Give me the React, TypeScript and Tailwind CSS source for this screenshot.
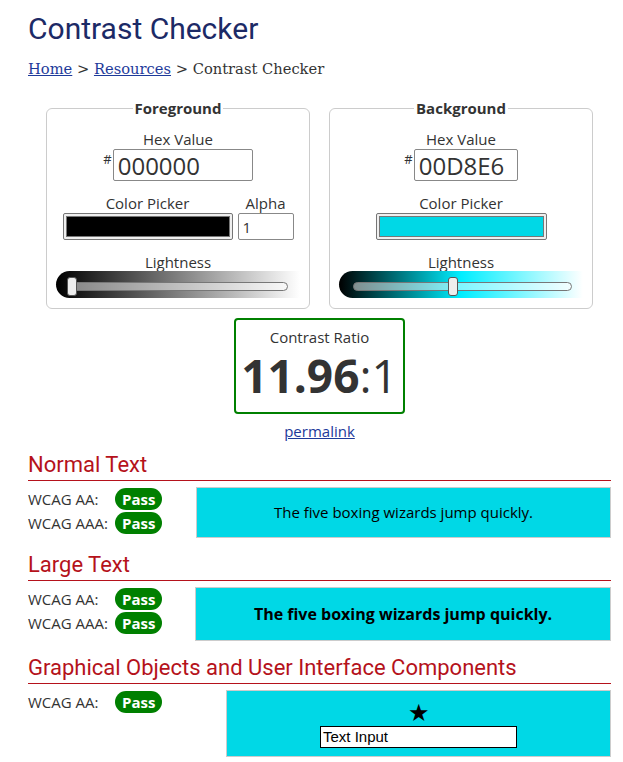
import React from 'react';

const FG = '#000000';

interface ColorFieldsetProps {
  title: string;
  hex: string;
  hexWidth: string;
  swatchWidth: string;
  showAlpha?: boolean;
  gradient: string;
  thumbLeft: string;
  trackInset: string;
}

// Slider = gradient strip + translucent track + thumb
const Lightness: React.FC<{ gradient: string; thumbLeft: string; trackInset: string }> = ({ gradient, thumbLeft, trackInset }) => (
  <div className={`relative h-[27px] rounded-l-full ${gradient}`}>
    <div className={`absolute top-[11px] h-[9px] rounded-full border border-[#777] bg-white/50 ${trackInset}`} />
    <div className={`absolute top-[6px] h-[19px] w-[10px] rounded-[3px] border border-[#555] bg-[#eee] ${thumbLeft}`} />
  </div>
);

const ColorFieldset: React.FC<ColorFieldsetProps> = ({ title, hex, hexWidth, swatchWidth, showAlpha, gradient, thumbLeft, trackInset }) => {
  return (
    <fieldset className="w-[264px] rounded-[6px] border border-[#ccc] px-[9px] pb-[10px]">
      <legend className="mx-auto px-[2px] text-[15px] font-bold leading-[20px] text-[#333]">{title}</legend>
      <div className="pt-[11px] text-center text-[15px] leading-[20px] text-[#333]">
        <div>Hex Value</div>
        <div className="flex justify-center">
          <span className="mr-[1px] mt-[3px] text-[13px] leading-[14px]">#</span>
          <input
            readOnly
            value={hex}
            className={`h-[32px] rounded-[2px] border border-[#888] px-[4px] text-[24px] text-[#333] outline-none ${hexWidth}`}
          />
        </div>
        <div className="mt-[12px] flex items-end justify-center gap-[5px]">
          <div className="flex flex-col items-center">
            <div>Color Picker</div>
            <div className={`h-[27px] rounded-[2px] border border-[#767676] bg-[#efefef] p-[2px] ${swatchWidth}`}>
              <div className="h-full w-full border border-[#777]" style={{ backgroundColor: '#' + hex }} />
            </div>
          </div>
          {showAlpha && (
            <div className="flex flex-col items-center">
              <div>Alpha</div>
              <input
                readOnly
                value="1"
                className="h-[27px] w-[56px] rounded-[2px] border border-[#888] px-[4px] text-[15px] text-[#333] outline-none"
              />
            </div>
          )}
        </div>
        <div className="mt-[13px] leading-[18px]">Lightness</div>
        <Lightness gradient={gradient} thumbLeft={thumbLeft} trackInset={trackInset} />
      </div>
    </fieldset>
  );
};

const Pass: React.FC = () => (
  <span className="inline-flex h-[22px] items-center rounded-full bg-[#008000] px-[7px] text-[15px] font-bold text-white">Pass</span>
);

const Row: React.FC<{ label: string }> = ({ label }) => (
  <div className="flex h-[24px] items-center">
    <span className="w-[87px]">{label}</span>
    <Pass />
  </div>
);

const SectionHeading: React.FC<{ children: React.ReactNode }> = ({ children }) => (
  <h2 className="border-b border-[#b5121b] pb-[2px] text-[22px] leading-[26px] text-[#b5121b] [font-family:Roboto,sans-serif]">
    {children}
  </h2>
);

export default function App() {
  return (
    <div className="min-h-[762px] bg-white pl-[28px] pr-[12px] pt-[12px] text-[#333] [font-family:'Open_Sans',sans-serif]">
      <h1 className="text-[30px] leading-[34px] text-[#1c2a66] [font-family:Roboto,sans-serif]">Contrast Checker</h1>
      <div className="mt-[13px] text-[14.7px] leading-[20px] text-[#333] [font-family:'DejaVu_Serif',serif]">
        <a href="#" className="text-[#1d3a9a] underline">Home</a> &gt;{' '}
        <a href="#" className="text-[#1d3a9a] underline">Resources</a> &gt; Contrast Checker
      </div>

      <div className="mt-[19px] flex justify-center gap-[19px]">
        <ColorFieldset
          title="Foreground"
          hex="000000"
          hexWidth="w-[140px]"
          swatchWidth="w-[170px]"
          showAlpha
          gradient="bg-[linear-gradient(to_right,#000,#fff)]"
          thumbLeft="left-[11px]"
          trackInset="left-[16px] right-[12px]"
        />
        <ColorFieldset
          title="Background"
          hex="00D8E6"
          hexWidth="w-[104px]"
          swatchWidth="w-[171px]"
          gradient="bg-[linear-gradient(to_right,#000,#00eeff,#fff)]"
          thumbLeft="left-[109px]"
          trackInset="left-[14px] right-[11px]"
        />
      </div>

      <div className="mt-[9px] flex flex-col items-center">
        <div className="w-[171px] rounded-[4px] border-2 border-[#008000] pb-[11px] pt-[7px] text-center">
          <div className="text-[15px] leading-[20px]">Contrast Ratio</div>
          <div className="mt-[2px] text-[46px] leading-[52px] text-[#333]">
            <span className="font-bold">11.96</span>:1
          </div>
        </div>
        <a href="#" className="mt-[7px] text-[15px] leading-[20px] text-[#1d3a9a] underline">permalink</a>
      </div>

      <div className="mt-[11px]">
        <SectionHeading>Normal Text</SectionHeading>
        <div className="mt-[6px] flex text-[15px]">
          <div className="w-[168px] flex-none">
            <Row label="WCAG AA:" />
            <Row label="WCAG AAA:" />
          </div>
          <div className="flex h-[51px] flex-1 items-center justify-center border border-[#ccc] bg-[#00D8E6] text-[15px]" style={{ color: FG }}>
            The five boxing wizards jump quickly.
          </div>
        </div>
      </div>

      <div className="mt-[14px]">
        <SectionHeading>Large Text</SectionHeading>
        <div className="mt-[6px] flex text-[15px]">
          <div className="w-[167px] flex-none">
            <Row label="WCAG AA:" />
            <Row label="WCAG AAA:" />
          </div>
          <div className="flex h-[54px] flex-1 items-center justify-center border border-[#ccc] bg-[#00D8E6] text-[16px] font-bold" style={{ color: FG }}>
            The five boxing wizards jump quickly.
          </div>
        </div>
      </div>

      <div className="mt-[14px] pb-[7px]">
        <SectionHeading>Graphical Objects and User Interface Components</SectionHeading>
        <div className="mt-[6px] flex text-[15px]">
          <div className="w-[198px] flex-none">
            <Row label="WCAG AA:" />
          </div>
          <div className="flex h-[67px] flex-1 flex-col items-center justify-center border border-[#ccc] bg-[#00D8E6]">
            <span className="text-[24px] leading-[28px]" style={{ color: FG }}>★</span>
            <div className="mb-[2px] h-[22px] w-[197px] border border-black bg-white px-[2px] text-[15px] leading-[20px] text-black [font-family:'Liberation_Sans',Arial,sans-serif]">
              Text Input
            </div>
          </div>
        </div>
      </div>
    </div>
  );
}
